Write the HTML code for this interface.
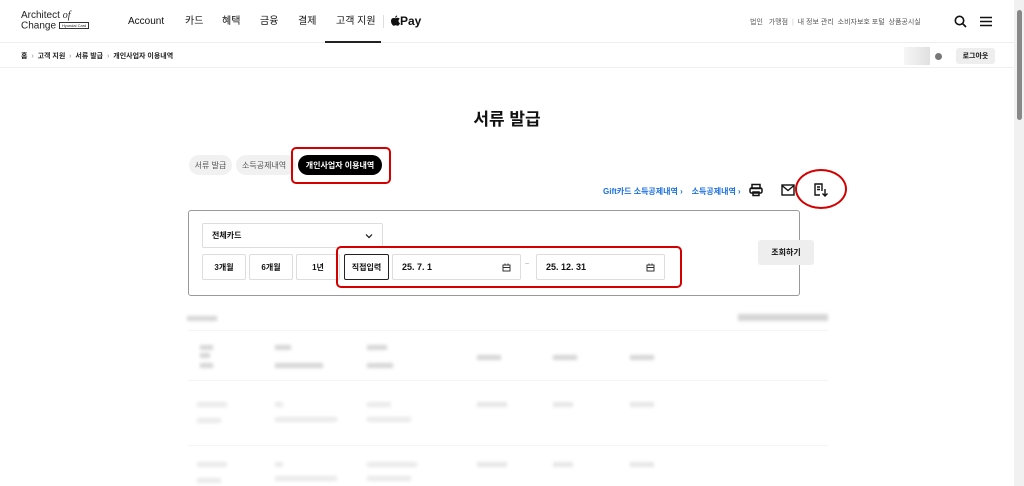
<!DOCTYPE html>
<html><head><meta charset="utf-8"><style>
*{margin:0;padding:0;box-sizing:border-box}
body{width:1024px;height:486px;overflow:hidden;background:#fff;font-family:"Liberation Sans","Noto Sans CJK KR",sans-serif;color:#111;position:relative}
.a{position:absolute;white-space:nowrap}
.hdr{position:absolute;left:0;top:0;width:1014px;height:43px;border-bottom:1px solid #eee}
.nav{font-size:10px;top:16px;line-height:12px}
.bc{font-size:7px;font-weight:bold;top:51px;color:#222}
.btn{position:absolute;border:1px solid #ddd;border-radius:2px;font-size:8px;font-weight:bold;display:flex;align-items:center;justify-content:center;background:#fff}
.red{position:absolute;border:2.5px solid #d40000;border-radius:5px}
.bl{position:absolute;background:#777;filter:blur(1.5px);opacity:.3;height:5px}
</style></head><body>
<div class="hdr"></div>
<div class="a" style="left:21px;top:11px;font-size:10px;line-height:10px;color:#222">Architect <i style="font-family:'Liberation Serif'">of</i><br>Change <span style="font-size:4px;border:1px solid #333;padding:0 2px;vertical-align:middle">Hyundai Card</span></div>
<div class="a nav" style="left:128px">Account</div>
<div class="a nav" style="left:185px">카드</div>
<div class="a nav" style="left:222px">혜택</div>
<div class="a nav" style="left:260px">금융</div>
<div class="a nav" style="left:298px">결제</div>
<div class="a nav" style="left:336px">고객 지원</div>
<div class="a" style="left:325px;top:41px;width:56px;height:2px;background:#222"></div>
<div class="a" style="left:383px;top:15px;width:1px;height:13px;background:#ddd"></div>
<svg class="a" style="left:391px;top:15px" width="9" height="11"><path d="M6.2 0.5c0 1.2-1 2.3-2.1 2.2 0-1.1 1-2.2 2.1-2.2zM4.5 3.2c.7 0 1.5-.5 2.3-.4 1 .1 1.6.6 1.9 1.1-1.8 1.1-1.5 3.5.3 4.2-.4 1.1-1.2 2.6-2.3 2.6-.8 0-1-.5-2-.5s-1.3.5-2 .5C1.5 10.7 0 8.2 0 6 0 4 1.3 3 2.5 3c.8 0 1.5.2 2 .2z" fill="#111"/></svg>
<div class="a" style="left:400px;top:14px;font-size:12px;font-weight:bold;line-height:14px">Pay</div>
<div class="a" style="left:750px;top:17px;font-size:7px;color:#555">법인 &nbsp; 가맹점 &nbsp;<span style="color:#ccc">|</span>&nbsp; 내 정보 관리 &nbsp;소비자보호 포털 &nbsp;상품공시실</div>
<svg class="a" style="left:954px;top:15px" width="13" height="13"><circle cx="5.5" cy="5.5" r="4.2" fill="none" stroke="#111" stroke-width="1.6"/><path d="M8.5 8.5l3.5 3.5" stroke="#111" stroke-width="1.6"/></svg>
<svg class="a" style="left:980px;top:16px" width="12" height="11"><path d="M0 1.5h12M0 5.5h12M0 9.5h12" stroke="#111" stroke-width="1.5"/></svg>
<div class="a" style="left:0;top:67px;width:1014px;height:1px;background:#f0f0f0"></div>
<div class="a bc" style="left:21px">홈 <span style="color:#aaa">&nbsp;›&nbsp;</span> 고객 지원 <span style="color:#aaa">&nbsp;›&nbsp;</span> 서류 발급 <span style="color:#aaa">&nbsp;›&nbsp;</span> 개인사업자 이용내역</div>
<div class="a" style="left:904px;top:47px;width:26px;height:18px;background:linear-gradient(90deg,#f6f6f6,#e0e0e0)"></div>
<div class="a" style="left:935px;top:53px;width:7px;height:7px;border-radius:50%;background:#777"></div>
<div class="a" style="left:956px;top:48px;width:39px;height:16px;background:#eee;border-radius:3px;font-size:7px;font-weight:bold;display:flex;align-items:center;justify-content:center">로그아웃</div>
<div class="a" style="left:1014px;top:0;width:10px;height:486px;background:#f1f1f1"></div>
<div class="a" style="left:1017px;top:10px;width:5px;height:110px;background:#888;border-radius:3px"></div>
<div class="a" style="left:0;width:1014px;text-align:center;top:105px;font-size:17px;font-weight:bold">서류 발급</div>
<div class="a" style="left:189px;top:155px;width:43px;height:20px;border-radius:10px;background:#f1f1f1;font-size:8px;color:#555;display:flex;align-items:center;justify-content:center">서류 발급</div>
<div class="a" style="left:236px;top:155px;width:60px;height:20px;border-radius:10px;background:#f1f1f1;font-size:8px;color:#555;padding-left:6px;display:flex;align-items:center">소득공제내역</div>
<div class="a" style="left:298px;top:155px;width:84px;height:20px;border-radius:10px;background:#000;color:#fff;font-size:8px;font-weight:bold;display:flex;align-items:center;justify-content:center">개인사업자 이용내역</div>
<div class="red" style="left:291px;top:147px;width:100px;height:37px"></div>
<div class="a" style="left:603px;top:186px;font-size:8px;font-weight:bold;color:#1a6fe0">Gift카드 소득공제내역 › &nbsp;&nbsp;&nbsp;소득공제내역 ›</div>
<svg class="a" style="left:749px;top:183px" width="14" height="14"><rect x="3" y="1.5" width="8" height="4" fill="none" stroke="#111" stroke-width="1.5"/><rect x="1" y="5" width="12" height="5" rx="1.5" fill="none" stroke="#111" stroke-width="1.5"/><rect x="4" y="9" width="6" height="3.5" fill="none" stroke="#111" stroke-width="1.5"/></svg>
<svg class="a" style="left:781px;top:184px" width="14" height="12"><rect x="1" y="1" width="12" height="10" fill="none" stroke="#111" stroke-width="1.4"/><path d="M1 1.5l6 5 6-5" fill="none" stroke="#111" stroke-width="1.4"/></svg>
<svg class="a" style="left:813px;top:182px" width="16" height="16"><path d="M9 9V2H2v11h5" fill="none" stroke="#111" stroke-width="1.4"/><path d="M4 5h3M4 7.5h3M12 7v7M9.5 11.5l2.5 2.5 2.5-2.5" fill="none" stroke="#111" stroke-width="1.4"/></svg>
<div class="a" style="left:795px;top:169px;width:52px;height:40px;border:2.5px solid #d40000;border-radius:50%"></div>
<div class="a" style="left:188px;top:210px;width:612px;height:86px;border:1px solid #999;border-radius:3px"></div>
<div class="btn" style="left:202px;top:223px;width:181px;height:25px;justify-content:space-between;padding:0 9px"><span>전체카드</span><svg width="8" height="6"><path d="M1 1.5l3 3 3-3" fill="none" stroke="#111" stroke-width="1.2"/></svg></div>
<div class="btn" style="left:202px;top:254px;width:44px;height:26px">3개월</div>
<div class="btn" style="left:249px;top:254px;width:44px;height:26px">6개월</div>
<div class="btn" style="left:296px;top:254px;width:44px;height:26px">1년</div>
<div class="btn" style="left:344px;top:254px;width:45px;height:26px;border:1.5px solid #222">직접입력</div>
<div class="btn" style="left:392px;top:254px;width:129px;height:26px;justify-content:space-between;padding:0 9px;font-size:9px"><span>25. 7. 1</span><svg width="9" height="9"><rect x="1" y="2" width="7" height="6" fill="none" stroke="#333" stroke-width="1"/><path d="M1 4.5h7M3 0.5v2M6 0.5v2" stroke="#333"/></svg></div>
<div class="a" style="left:525px;top:261px;font-size:7px;color:#999">~</div>
<div class="btn" style="left:536px;top:254px;width:129px;height:26px;justify-content:space-between;padding:0 9px;font-size:9px"><span>25. 12. 31</span><svg width="9" height="9"><rect x="1" y="2" width="7" height="6" fill="none" stroke="#333" stroke-width="1"/><path d="M1 4.5h7M3 0.5v2M6 0.5v2" stroke="#333"/></svg></div>
<div class="red" style="left:336px;top:246px;width:346px;height:42px"></div>
<div class="a" style="left:758px;top:240px;width:56px;height:25px;background:#eee;border-radius:3px;font-size:8px;font-weight:bold;display:flex;align-items:center;justify-content:center">조회하기</div>
<div class="bl" style="left:187px;top:316px;width:30px"></div>
<div class="bl" style="left:738px;top:314px;width:90px;height:7px"></div>
<div class="a" style="left:188px;top:330px;width:640px;height:1px;background:#f5f5f5"></div>
<div class="bl" style="left:200px;top:345px;width:13px"></div><div class="bl" style="left:200px;top:353px;width:10px"></div><div class="bl" style="left:200px;top:363px;width:13px"></div>
<div class="bl" style="left:275px;top:345px;width:16px"></div><div class="bl" style="left:275px;top:363px;width:48px"></div>
<div class="bl" style="left:367px;top:345px;width:20px"></div><div class="bl" style="left:367px;top:363px;width:26px"></div>
<div class="bl" style="left:477px;top:355px;width:24px"></div>
<div class="bl" style="left:553px;top:355px;width:24px"></div>
<div class="bl" style="left:630px;top:355px;width:24px"></div>
<div class="a" style="left:188px;top:380px;width:640px;height:1px;background:#f5f5f5"></div>
<div class="bl" style="left:197px;top:402px;width:30px;opacity:.15"></div><div class="bl" style="left:197px;top:418px;width:24px;opacity:.15"></div>
<div class="bl" style="left:275px;top:402px;width:8px;opacity:.15"></div><div class="bl" style="left:275px;top:417px;width:62px;opacity:.15"></div>
<div class="bl" style="left:367px;top:402px;width:24px;opacity:.15"></div><div class="bl" style="left:367px;top:417px;width:44px;opacity:.15"></div>
<div class="bl" style="left:477px;top:402px;width:30px;opacity:.18"></div>
<div class="bl" style="left:553px;top:402px;width:20px;opacity:.18"></div>
<div class="bl" style="left:630px;top:402px;width:24px;opacity:.18"></div>
<div class="a" style="left:188px;top:445px;width:640px;height:1px;background:#f5f5f5"></div>
<div class="bl" style="left:197px;top:462px;width:30px;opacity:.15"></div><div class="bl" style="left:197px;top:478px;width:24px;opacity:.15"></div>
<div class="bl" style="left:275px;top:462px;width:8px;opacity:.15"></div><div class="bl" style="left:275px;top:476px;width:62px;opacity:.15"></div>
<div class="bl" style="left:367px;top:462px;width:50px;opacity:.15"></div><div class="bl" style="left:367px;top:476px;width:44px;opacity:.15"></div>
<div class="bl" style="left:477px;top:462px;width:30px;opacity:.18"></div>
<div class="bl" style="left:553px;top:462px;width:20px;opacity:.18"></div>
<div class="bl" style="left:630px;top:462px;width:24px;opacity:.18"></div>
</body></html>
